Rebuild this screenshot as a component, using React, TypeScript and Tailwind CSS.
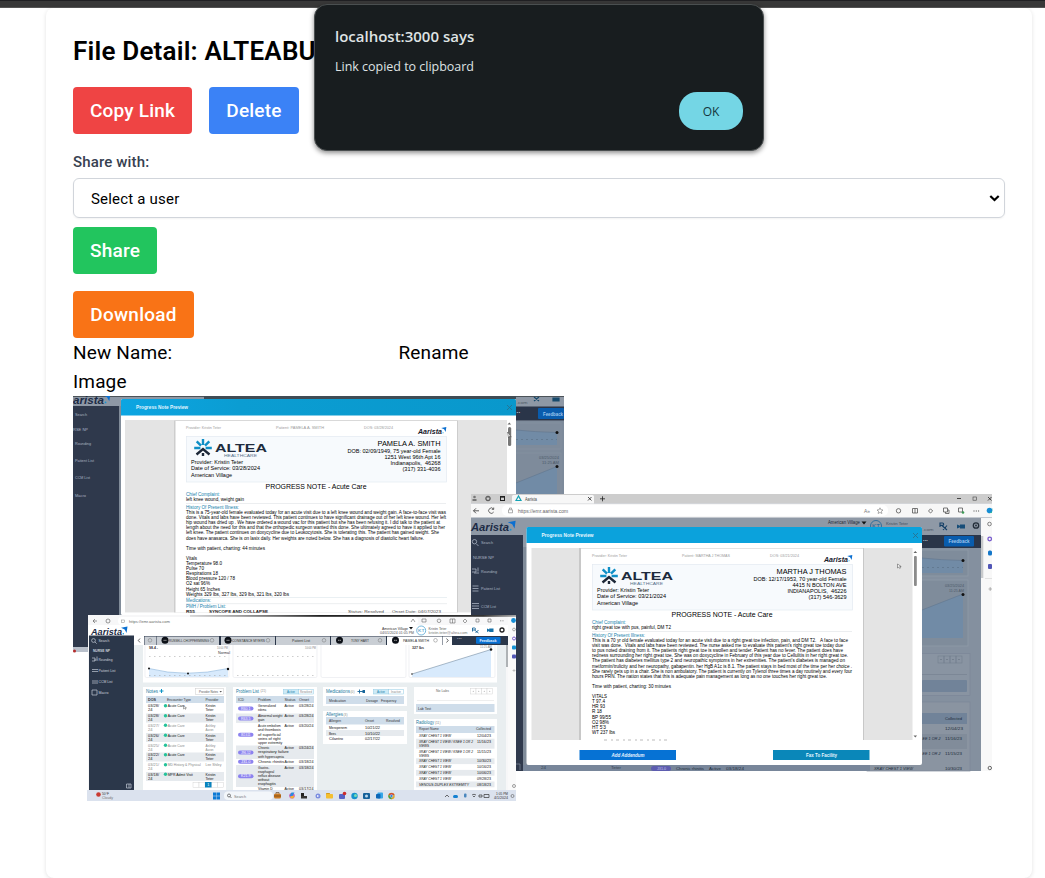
import React from "react";

type TProps = {
  x: number;
  y: number;
  s?: number;
  w?: number;
  f?: string;
  b?: boolean;
  i?: boolean;
  end?: boolean;
  children: React.ReactNode;
};

function T({ x, y, s = 5, w, f = "#222", b, i, end, children }: TProps) {
  return (
    <text
      x={x}
      y={y}
      fontSize={s}
      fill={f}
      fontWeight={b ? 700 : 400}
      fontStyle={i ? "italic" : "normal"}
      textAnchor={end ? "end" : "start"}
      textLength={w}
      lengthAdjust="spacingAndGlyphs"
      xmlSpace="preserve"
    >
      {children}
    </text>
  );
}

function R({ x, y, w, h, f, r }: { x: number; y: number; w: number; h: number; f: string; r?: number }) {
  return <rect x={x} y={y} width={w} height={h} fill={f} rx={r} />;
}

function Aarista({
  x,
  y,
  s,
  w,
  dark = "#1c2b45",
  label = "Aarista",
}: {
  x: number;
  y: number;
  s: number;
  w: number;
  dark?: string;
  label?: string;
}) {
  return (
    <g>
      <T x={x} y={y} s={s} w={w} f={dark} b i>
        {label}
      </T>
      <path
        d={`M${x + w - s * 0.1} ${y - s * 0.75} l${s * 0.68} ${-s * 0.13} l${-s * 0.1} ${s * 0.68} l${-s * 0.2} ${-s * 0.36} z`}
        fill="#0b6fd0"
      />
      <circle cx={x + w + s * 0.14} cy={y - s * 0.1} r={s * 0.08} fill="#1596d4" />
    </g>
  );
}

function Altea({ x, y }: { x: number; y: number }) {
  return (
    <g>
      <g strokeWidth="2.4" fill="none">
        <path
          stroke="#0f8fc6"
          d={`M${x} ${y - 2.5}V${y - 8.5}M${x - 2} ${y - 1.800}l-4.300-4.300M${x + 2} ${y - 1.800}l4.300-4.300M${x - 2.600} ${y + 0.500}h-6.200M${x + 2.600} ${y + 0.500}h6.200`}
        />
        <path stroke="#1d2838" d={`M${x - 6.500} ${y + 7}L${x} ${y + 1.500}L${x + 6.500} ${y + 7}M${x} ${y + 5.500}v3`} />
      </g>
      <T x={x + 12} y={y + 4.300} s={11.500} w={52} f="#202b3d" b>
        ALTEA
      </T>
      <T x={x + 21} y={y + 9.200} s={3.400} w={33} f="#56708c">
        HEALTHCARE
      </T>
    </g>
  );
}

type Note = {
  x: number;
  y: number;
  patient: string;
  dos: string;
  name: string;
  nameW: number;
  info: [string, number][];
  complaint: [string, number];
  date: string;
  hpi: [string, number][];
  chart: [string, number];
  vitals: [string, number][];
};

// Progress note page; x, y are the top-left corner of the sheet.
function NoteSheet(n: Note) {
  const { x, y } = n;
  return (
    <g>
      <T x={x + 11} y={y + 8.3} s={4} w={35} f="#9b9b9b">
        Provider: Kristin Teter
      </T>
      <T x={x + 101} y={y + 8.3} s={4} w={48} f="#9b9b9b">
        {n.patient}
      </T>
      <T x={x + 189} y={y + 8.3} s={4} w={29} f="#9b9b9b">
        {n.dos}
      </T>
      <Aarista x={x + 243} y={y + 13} s={7.5} w={24} dark="#17202e" />
      <rect x={x + 11.5} y={y + 16} width="260" height="45.5" fill="#f7fafd" stroke="#e3eaf1" strokeWidth=".7" />
      <Altea x={x + 28} y={y + 27} />
      <T x={x + 16} y={y + 43.7} s={5.8} w={52} f="#000">
        Provider: Kristin Teter
      </T>
      <T x={x + 16} y={y + 49.9} s={5.8} w={69} f="#000">
        {n.date}
      </T>
      <T x={x + 16} y={y + 56} s={5.8} w={41} f="#000">
        American Village
      </T>
      <T x={x + 265.5} y={y + 25.5} s={7} w={n.nameW} f="#000" end>
        {n.name}
      </T>
      {n.info.map(([t, w], k) => (
        <T key={k} x={x + 265.5} y={y + 32.2 + k * 6.2} s={5.7} w={w} f="#000" end>
          {t}
        </T>
      ))}
      <T x={x + 90.5} y={y + 68.7} s={6.6} w={101} f="#000">
        PROGRESS NOTE - Acute Care
      </T>
      <T x={x + 11} y={y + 75.5} s={4.8} w={34} f="#1681ab">
        Chief Complaint:
      </T>
      <T x={x + 11} y={y + 80.8} s={4.8} w={n.complaint[1]} f="#000">
        {n.complaint[0]}
      </T>
      <R x={x + 11} y={y + 82.5} w={260} h={0.6} f="#dfe3e6" />
      <T x={x + 11} y={y + 88.2} s={4.8} w={53} f="#1681ab">
        History Of Present Illness:
      </T>
      {n.hpi.map(([t, w], k) => (
        <T key={k} x={x + 11} y={y + 93.5 + k * 5.1} s={4.8} w={w} f="#000">
          {t}
        </T>
      ))}
      <T x={x + 11} y={y + 93.5 + (n.hpi.length + 1) * 5.1} s={4.8} w={n.chart[1]} f="#000">
        {n.chart[0]}
      </T>
      {n.vitals.map(([t, w], k) => (
        <T key={k} x={x + 11} y={y + 93.5 + (n.hpi.length + 3 + k) * 5.1} s={4.8} w={w} f="#000">
          {t}
        </T>
      ))}
    </g>
  );
}

function WindowPamela() {
  return (
    <g>
      <R x={73} y={396} w={491} h={256} f="#8e98a5" />
      <R x={73} y={396} w={491} h={1} f="#4c5359" />
      <R x={204} y={396} w={312} h={3} f="#3f4c55" />
      <Aarista x={73} y={403.5} s={11} w={31} label="arista" />
      <R x={73} y={406} w={46} h={241} f="#2f394c" />
      <R x={73} y={647} w={15} h={5} f="#b9c0cb" />
      <circle cx="74.5" cy="651" r="1.5" fill="#b62b2b" />
      <T x={75} y={416} s={4} w={12} f="#aab3c2">Search</T>
      <T x={73} y={431} s={4} w={15} f="#aab3c2">RSE NP</T>
      <T x={75} y={445} s={4} w={16} f="#aab3c2">Rounding</T>
      <T x={75} y={462} s={4} w={19} f="#aab3c2">Patient List</T>
      <T x={75} y={479} s={4} w={15} f="#aab3c2">CCM List</T>
      <T x={75} y={496.5} s={4} w={11} f="#aab3c2">Macro</T>
      <R x={119} y={406} w={3} h={210} f="#818c99" />

      <R x={516} y={406.5} w={48} h={14} f="#2a3549" />
      <T x={516.5} y={403.5} s={4} w={11} f="#4d5866">.com</T>
      <path d="M534 397l5 4m0-4l-5 4M553 398h6v3h-6z" stroke="#184a6c" strokeWidth="1.2" fill="#184a6c" />
      <T x={516.5} y={413.5} s={5} w={4} f="#dbe3ee" b>··</T>
      <R x={538} y={408} w={26} h={11} f="#095cad" r={1} />
      <T x={543} y={415.7} s={4.7} w={20} f="#9fc5ec" b>Feedback</T>
      <R x={516} y={421} w={48} h={73} f="#7e8b9b" />
      <path d="M516 430Q535 432 557 432.500V445H516Z" fill="#718ba6" />
      <path d="M516 430Q535 432 557 432.500" stroke="#60768e" strokeWidth=".6" fill="none" />
      <path d="M516 439.500H557" stroke="#56697d" strokeWidth=".5" strokeDasharray="2 3" />
      <rect x="510" y="423" width="51" height="26" fill="none" stroke="#8793a1" strokeWidth=".7" />
      <rect x="510" y="453" width="51" height="42" fill="none" stroke="#8793a1" strokeWidth=".7" />
      <path d="M516 483L557 466.500V494H516Z" fill="#718ba6" />
      <path d="M516 483L557 466.500" stroke="#60768e" strokeWidth=".6" />
      <circle cx="557" cy="432.500" r="1.5" fill="#111" />
      <circle cx="557" cy="466.500" r="1.5" fill="#111" />
      <T x={559} y={458.5} s={3.7} w={20} f="#4c5968" end>03/25/2024</T>
      <T x={559} y={464} s={3.7} w={17} f="#4c5968" end>11:25 AM</T>

      <R x={121} y={399} w={395} h={216} f="#fff" r={1.5} />
      <path d="M121 415.500v-15a1.500 1.500 0 0 1 1.500-1.500h392a1.500 1.500 0 0 1 1.500 1.500v15z" fill="url(#blueBar)" />
      <T x={136} y={409} s={5.3} w={52} f="#e2f5ff" b>Progress Note Preview</T>
      <path d="M507 405l5 5m0-5l-5 5" stroke="#2c6c88" strokeWidth=".8" />
      <R x={125} y={420} w={382} h={192.5} f="#e4e4e4" />
      <R x={174} y={420.5} w={284} h={192} f="#cdcdcd" />
      <R x={175.5} y={421} w={281.5} h={191.5} f="#fff" />
      <R x={508} y={427} w={3.2} h={19} f="#777" r={1.5} />
      <path d="M507.500 424.500l1.800-2 1.800 2z" fill="#666" />
      <path d="M507.500 432l1 6 1.200-2 1.600 1z" fill="#fff" stroke="#444" strokeWidth=".5" />
      <NoteSheet
        x={175}
        y={420.5}
        patient="Patient: PAMELA A. SMITH"
        dos="DOS: 03/28/2024"
        name="PAMELA A. SMITH"
        nameW={63}
        info={[
          ["DOB: 02/09/1949, 75 year-old Female", 93],
          ["1251 West 96th Apt 16", 56],
          ["Indianapolis,  46268", 50],
          ["(317) 331-4036", 38],
        ]}
        date="Date of Service: 03/28/2024"
        complaint={["left knee wound, weight gain", 58]}
        hpi={[
          ["This is a 75-year-old female evaluated today for an acute visit due to a left knee wound and weight gain. A face-to-face visit was", 260],
          ["done. Vitals and labs have been reviewed. This patient continues to have significant drainage out of her left knee wound. Her left", 260],
          ["hip wound has dried up . We have ordered a wound vac for this patient but she has been refusing it. I did talk to the patient at", 254],
          ["length about the need for this and that the orthopedic surgeon wanted this done. She ultimately agreed to have it applied to her", 259],
          ["left knee. The patient continues on doxycycline due to Leukocytosis. She is tolerating this. The patient has gained weight. She", 253],
          ["does have anasarca. She is on lasix daily. Her weights are noted below. She has a diagnosis of diastolic heart failure.", 238],
        ]}
        chart={["Time with patient, charting: 44 minutes", 79]}
        vitals={[
          ["Vitals", 11],
          ["Temperature 98.0", 36],
          ["Pulse 70", 18],
          ["Respirations 18", 32],
          ["Blood pressure 120 / 78", 49],
          ["O2 sat 96%", 24],
          ["Height 65 Inches", 34],
          ["Weights 329 lbs, 327 lbs, 329 lbs, 321 lbs, 320 lbs", 103],
        ]}
      />
      <R x={186} y={597} w={261} h={0.6} f="#dce6ec" />
      <T x={186} y={602.3} s={4.6} w={25} f="#1681ab">Medications:</T>
      <R x={186} y={603.5} w={261} h={0.6} f="#dfe3e6" />
      <T x={186} y={608.3} s={4.6} w={40} f="#1681ab">PMH / Problem List:</T>
      <T x={186} y={613} s={4.3} w={9} f="#111" b>R55</T>
      <T x={209} y={613} s={4.3} w={59} f="#111" b>SYNCOPE AND COLLAPSE</T>
      <T x={348} y={613} s={4} w={36} f="#444">Status: Resolved</T>
      <T x={392} y={613} s={4} w={49} f="#444">Onset Date: 04/07/2023</T>
      <R x={125} y={612.8} w={391} h={2.2} f="#fff" />
    </g>
  );
}

function WindowMartha() {
  return (
    <g>
      <R x={471} y={494} w={521} h={277} f="#8f99a6" />
      <R x={471} y={494} w={521} h={9.5} f="#cdcdcd" />
      <path d="M512 503.500v-7a1.500 1.500 0 0 1 1.500-1.500h79a1.500 1.500 0 0 1 1.500 1.500v7z" fill="#f7f7f7" />
      <R x={471} y={503.5} w={521} h={14} f="#f7f7f7" />
      <circle cx="474.5" cy="497" r="1.3" fill="#777" />
      <R x={472.5} y={499} w={4} h={2} f="#777" />
      <circle cx="488" cy="498.500" r="2.300" fill="none" stroke="#444" strokeWidth=".9" />
      <path d="M486.500 497.500h3v2.500h-3z" fill="none" stroke="#555" strokeWidth=".5" />
      <rect x="500.500" y="496.500" width="4" height="4" fill="none" stroke="#222" strokeWidth="1" />
      <path d="M500 497h5" stroke="#222" strokeWidth="1.300" />
      <path d="M516 500.500l2.500-4.500 2.500 4.500z" fill="none" stroke="#14a3b5" strokeWidth="1.2" />
      <T x={525} y={500.5} s={4.5} w={12} f="#444">Aarista</T>
      <path
        d="M588 497l3.500 3.500m0-3.500l-3.500 3.500M600 498.800h5m-2.500-2.500v5M957 498.500h4M988 497l3.500 3.500m0-3.500l-3.500 3.500"
        stroke="#222"
        strokeWidth=".8"
      />
      <rect x="973" y="497" width="3.500" height="3.200" fill="none" stroke="#444" strokeWidth=".6" />
      <R x={502} y={505} w={386} h={11} f="#fff" r={5} />
      <path d="M479 510.800h-5.500m2.500-2.500l-2.500 2.500 2.500 2.500" stroke="#333" strokeWidth=".8" fill="none" />
      <path d="M493.500 509a2.700 2.700 0 1 0 .2 3m0-4.500v1.900h-1.900" stroke="#333" strokeWidth=".7" fill="none" />
      <path d="M508.500 509.800h4v3h-4zM509.500 509.500v-1.500h2v1.500" stroke="#777" strokeWidth=".6" fill="none" />
      <T x={518} y={512.6} s={5} w={50} f="#666">https://emr.aarista.com</T>
      <T x={864} y={512.7} s={5} w={6} f="#777">A»</T>
      <path
        d="M880 507.800l.9 2 2.100.2-1.600 1.400.5 2.100-1.900-1.100-1.900 1.100.5-2.100-1.600-1.400 2.100-.2z"
        stroke="#777"
        strokeWidth=".6"
        fill="none"
      />
      <g stroke="#555" strokeWidth=".8" fill="none">
        <circle cx="898.500" cy="510.800" r="2.200" />
        <path d="M912.500 508.500h5v4.500h-5zM915 508.500v4.500M928.500 511l2-2.200 2.200 2.200-2.200 2zM943.500 508h4v4h-4zM945.500 512v1.500h3.500v-3.500h-1.500M958.500 508h4v4h-4z" />
      </g>
      <circle cx="963" cy="512.500" r="1.300" fill="#3b9a55" />
      <path d="M973.500 511h6" stroke="#444" strokeWidth="1" strokeDasharray="1 1.300" />

      <Aarista x={471} y={530.8} s={11.5} w={38} />
      <R x={471} y={535} w={52} h={236} f="#2f394c" />
      <g stroke="#aab3c2" strokeWidth=".8" fill="none">
        <circle cx="474.500" cy="541.700" r="2.200" />
        <path d="M476.500 544l2 2M472 569h4v3h-4M474 573h5M478 567.500v4M472.500 586h6M472.500 588.500h6M472.500 591h6M472 603.500h7M472 606h7M472 608.500h7" />
      </g>
      <T x={481} y={544} s={4} w={12} f="#aab3c2">Search</T>
      <T x={473} y={558.5} s={4} w={21} f="#aab3c2">NURSE NP</T>
      <T x={481} y={572.5} s={4} w={16} f="#aab3c2">Rounding</T>
      <T x={481} y={590} s={4} w={19} f="#aab3c2">Patient List</T>
      <T x={481} y={607.5} s={4} w={15} f="#aab3c2">CCM List</T>
      <R x={523} y={547} w={4} h={224} f="#7f8b99" />
      <path d="M516 764h4v6" stroke="#8c95a5" strokeWidth=".6" fill="none" />

      <T x={828} y={524.3} s={4.5} w={32} f="#1d2733">American Village</T>
      <path d="M861.500 521.500h5l-2.500 3z" fill="#111" />
      <circle cx="876" cy="526" r="5.500" fill="none" stroke="#19649a" strokeWidth=".8" />
      <T x={872} y={527.7} s={5} w={8} f="#19649a">KT</T>
      <T x={886} y={524.5} s={4.3} w={22} f="#3e4d5e">Kristin Teter</T>
      <T x={922.5} y={531} s={4} w={11} f="#4d5866">.com</T>
      <g stroke="#143f66" strokeWidth="1.100" fill="none">
        <path d="M940 527v-4h2.500a1.200 1.200 0 0 1 0 2.400H940M942 525.500l5 4.500M947 525.500l-4 4.500" />
      </g>
      <path d="M957 524.500l3 1.200v-1.200h5v4h-5v-1.200l-3 1.200z" fill="#174d78" />
      <circle cx="976" cy="525.500" r="2.700" fill="none" stroke="#222c38" strokeWidth="1.300" />
      <circle cx="976" cy="525.500" r=".9" fill="#222c38" />

      <R x={922} y={535} w={59} h={13} f="#2a3549" />
      <T x={923} y={541.5} s={5} w={5} f="#dbe3ee" b>···</T>
      <R x={944} y={536} w={30} h={10.5} f="#095cad" r={1} />
      <T x={948.5} y={543} s={4.7} w={21} f="#9fc5ec" b>Feedback</T>
      <R x={922} y={548} w={59} h={223} f="#84909f" />
      <rect x="915" y="550" width="53" height="26" fill="#7f8c9b" stroke="#909ba8" strokeWidth=".8" />
      <path d="M922 558Q940 560 963 560.500V573H922Z" fill="#718ba6" />
      <path d="M922 567.500h41" stroke="#56697d" strokeWidth=".5" strokeDasharray="2 3" />
      <rect x="915" y="580" width="53" height="66" fill="#7f8c9b" stroke="#909ba8" strokeWidth=".8" />
      <path d="M922 610L963 594V638H922Z" fill="#718ba6" />
      <path d="M922 558Q940 560 963 560.500M922 610L963 594" stroke="#60768e" strokeWidth=".6" fill="none" />
      <circle cx="963" cy="560.500" r="1.5" fill="#111" />
      <circle cx="963" cy="594.500" r="1.5" fill="#111" />
      <T x={964} y={586.5} s={3.7} w={19} f="#4c5968" end>03/25/2024</T>
      <T x={964} y={592} s={3.7} w={15} f="#4c5968" end>11:25 AM</T>
      <rect x="915" y="653.500" width="55" height="42" fill="#8994a2" stroke="#7b8797" strokeWidth=".7" />
      <R x={922} y={680} w={45} h={12} f="#718399" r={1} />
      {[938, 944, 950, 956].map((x) => (
        <g key={x}>
          <rect x={x} y="656" width="6" height="7" fill="none" stroke="#6f7b8a" strokeWidth=".5" />
          <circle cx={x + 3} cy="659.500" r=".6" fill="#5c6878" />
        </g>
      ))}
      <path d="M922 674.500h45" stroke="#6f7b8a" strokeWidth=".5" />
      <rect x="867" y="702" width="103" height="69" fill="#8a94a1" stroke="#7b8797" strokeWidth=".7" />
      <R x={922} y={713} w={45} h={11} f="#718399" />
      <T x={945} y={720} s={4.2} w={17} f="#202c3a">Collected</T>
      <R x={922} y={734} w={45} h={15} f="#818c9a" />
      <T x={945} y={730} s={4.2} w={18} f="#202c3a">12/04/23</T>
      <T x={922.5} y={739.5} s={4.2} w={18} f="#202c3a" i>EE 1 OR 2</T>
      <T x={945} y={739.5} s={4.2} w={17} f="#202c3a">11/16/23</T>
      <T x={922.5} y={754.5} s={4.2} w={18} f="#202c3a" i>EE 1 OR 2</T>
      <T x={945} y={754.5} s={4.2} w={17} f="#202c3a">11/15/23</T>
      <R x={981} y={518} w={11} h={253} f="#f8f8f8" />
      <R x={981} y={536} w={2.3} h={42} f="#c8cacc" />
      <circle cx="989.500" cy="510.500" r="2.800" fill="#168ed5" />
      <path d="M992 508v5h-4a3.500 3.500 0 0 0 4-5" fill="#35bd93" />
      <circle cx="989.500" cy="524" r="1.800" fill="none" stroke="#666" strokeWidth=".8" />
      <circle cx="989.700" cy="539" r="1.800" fill="none" stroke="#7659cc" strokeWidth="1.300" />
      <R x={988} y={550.5} w={4} h={5} f="#1477c9" r={1.5} />
      <R x={988} y={564} w={4} h={5} f="#5156b6" r={1} />
      <R x={985} y={578} w={7} h={0.5} f="#ccc" />
      <path d="M988.500 589h3.500m-1.800-2v4" stroke="#888" strokeWidth=".6" />
      <circle cx="989.800" cy="768" r="1.700" fill="none" stroke="#666" strokeWidth="1" />
      <R x={523} y={765} w={347} h={6} f="#78869a" />
      <T x={541} y={769} s={4} w={5} f="#333f4f">24</T>
      <T x={611} y={769} s={4} w={10} f="#333f4f">Teter</T>
      <R x={651} y={766} w={20} h={5} f="#5e5db0" r={2.5} />
      <T x={657} y={770.2} s={4} w={9} f="#c5c7ea">J31.0</T>
      <T x={676} y={770} s={4.2} w={28} f="#202c3a">Chronic rhinitis</T>
      <T x={709} y={770} s={4.2} w={12} f="#202c3a">Active</T>
      <T x={726} y={770} s={4.2} w={18} f="#202c3a">03/18/24</T>
      <T x={874} y={770} s={4.2} w={39} f="#202c3a" i>XRAY CHEST 1 VIEW</T>
      <T x={945} y={770} s={4.2} w={17} f="#202c3a">10/30/23</T>

      <R x={526.5} y={527} w={395.5} h={238} f="#fff" r={2} />
      <path d="M526.500 543v-14.500a1.500 1.500 0 0 1 1.500-1.500h392.500a1.500 1.500 0 0 1 1.500 1.500v14.500z" fill="#0ba2dc" />
      <T x={541.5} y={537} s={5.3} w={52} f="#e8f8ff" b>Progress Note Preview</T>
      <path d="M913 533l5 5m0-5l-5 5" stroke="#2c6c88" strokeWidth=".8" />
      <R x={531.5} y={548} w={381} h={192} f="#e4e4e4" />
      <R x={579} y={548} w={285} h={192} f="#c8c8c8" />
      <R x={581} y={548.5} w={282} h={192} f="#fff" />
      <R x={914} y={556} w={2.8} h={30} f="#8b8b8b" r={1} />
      <path d="M913.500 553l1.800-2 1.800 2zM913.500 735.500l1.800 2 1.800-2z" fill="#666" />
      <path d="M897.500 564v4l1.200-1 1 1.500.8-.5-.8-1.500h1.500z" fill="#fff" stroke="#444" strokeWidth=".5" />
      <NoteSheet
        x={581}
        y={548.5}
        patient="Patient: MARTHA J THOMAS"
        dos="DOS: 03/21/2024"
        name="MARTHA J THOMAS"
        nameW={70}
        info={[
          ["DOB: 12/17/1953, 70 year-old Female", 93],
          ["4415 N BOLTON AVE", 54],
          ["INDIANAPOLIS,  46226", 59],
          ["(317) 546-3629", 38],
        ]}
        date="Date of Service: 03/21/2024"
        complaint={["right great toe with pus, painful, DM T2", 79]}
        hpi={[
          ["This is a 70 yr old female evaluated today for an acute visit due to a right great toe infection, pain, and DM T2.   A face to face", 256],
          ["visit was done.  Vitals and labs have been reviewed. The nurse asked me to evaluate this patient's right great toe today due", 251],
          ["to pus noted draining from it. The patients right great toe is swollen and tender. Patient has no fever. The patient does have", 251],
          ["redness surrounding her right great toe. She was on doxycycline in February of this year due to Cellulitis in her right great toe.", 256],
          ["The patient has diabetes mellitus type 2 and neuropathic symptoms in her extremities. The patient's diabetes is managed on", 253],
          ["metformin/trulicity and her neuropathy, gabapentin. her HgB A1c is 8.1. The patient stays in bed most of the time per her choice .", 260],
          ["She rarely gets up in a chair. She is non ambulatory. The patient is currently on Tylenol three times a day routinely and every four", 260],
          ["hours PRN. The nation states that this is adequate pain management as long as no one touches her right great toe.", 235],
        ]}
        chart={["Time with patient, charting: 30 minutes", 79]}
        vitals={[
          ["VITALS", 15],
          ["T 97.4", 13],
          ["HR 93", 13],
          ["R 18", 10],
          ["BP 99/55", 19],
          ["O2 98%", 17],
          ["HT 5'3", 14],
          ["WT 237 lbs", 23],
        ]}
      />
      <path d="M604 740h66" stroke="#aaa" strokeWidth=".8" strokeDasharray="3 4 2 3" />
      <R x={579.5} y={750} w={96.5} h={10} f="#0672d4" />
      <T x={611.5} y={757} s={5} w={33} f="#e6f2ff" i b>Add Addendum</T>
      <R x={773} y={750} w={96.5} h={10} f="#0a87b9" />
      <T x={806} y={757} s={5} w={31} f="#e6f6ff" b>Fax To Facility</T>
    </g>
  );
}

const notes: [number, string, string, string, string, string, boolean][] = [
  [706, "03/28/", "24", "Acute Care", "Kristin", "Teter", true],
  [716, "03/28/", "24", "Acute Care", "Kristin", "Teter", true],
  [725.5, "03/27/", "24", "Acute Care", "Ashley", "Aaron", false],
  [735.5, "03/26/", "24", "Acute Care", "Kristin", "Teter", true],
  [745.5, "03/25/", "24", "Acute Care", "Ashley", "Aaron", false],
  [755, "03/22/", "24", "Acute Care", "Kristin", "Teter", true],
  [765, "03/21/", "24", "MD History & Physical", "Lee Shiley", "", false],
  [774.5, "03/18/", "24", "MPR Admit Visit", "Kristin", "Teter", true],
];

const problems: [number, string, string[], string, string][] = [
  [706, "R60.1", ["Generalized", "edema"], "03/28/24", "#fff"],
  [716, "R63.5", ["Abnormal weight", "gain"], "03/28/24", "#e6eaee"],
  [726, "I82.611", ["Acute embolism", "and thrombosis", "of superficial", "veins of right", "upper extremity"], "03/20/24", "#fff"],
  [748, "J96.12", ["Chronic", "respiratory failure", "with hypercapnia"], "03/24/24", "#e6eaee"],
  [761.5, "J31.0", ["Chronic rhinitis"], "03/18/24", "#fff"],
  [767.5, "K21.9", ["Gastro-", "esophageal", "reflux disease", "without", "esophagitis"], "03/18/24", "#e6eaee"],
  [788.7, "", ["Vitamin D"], "03/17/24", "#fff"],
];

const radiology: [number, string, string, boolean][] = [
  [736.7, "XRAY CHEST 1 VIEW", "12/04/23", false],
  [742.7, "XRAY CHEST 1 VIEW / KNEE 1 OR 2", "11/16/23", true],
  [752.5, "XRAY CHEST 1 VIEW / KNEE 1 OR 2", "11/15/23", false],
  [762.3, "XRAY CHEST 1 VIEW", "10/30/23", true],
  [768.1, "XRAY CHEST 1 VIEW", "10/16/23", false],
  [773.9, "XRAY CHEST 1 VIEW", "10/06/23", true],
  [779.7, "XRAY CHEST 1 VIEW", "09/28/23", false],
  [785.5, "VENOUS DUPLEX EXTREMITY", "08/18/23", true],
];

function WindowDashboard() {
  return (
    <g>
      <R x={88} y={615} w={428} h={186} f="#f7f7f8" />
      <rect x="190" y="615" width="326" height="1.800" fill="url(#shade)" />
      <R x={118} y={617} w={300} h={8} f="#fff" r={4} />
      <path d="M97 621h-4m2-2l-2 2 2 2" stroke="#555" strokeWidth=".6" fill="none" />
      <circle cx="108" cy="621" r="2" fill="none" stroke="#555" strokeWidth=".6" />
      <rect x="121.500" y="620" width="3" height="2.500" fill="none" stroke="#888" strokeWidth=".5" />
      <T x={129} y={622.5} s={4.2} w={41} f="#666">https://emr.aarista.com</T>
      <g stroke="#666" strokeWidth=".6" fill="none">
        <path d="M411 622l2-3 2 3M422 619h4v3h-4zM450 619h5v4h-5zM452.500 619v4M463 621l2-2 2 2-2 2zM476 619h3v3h-3zM488 619h3v3h-3z" />
        <circle cx="439" cy="620.800" r="1.800" />
        <path d="M500 620.800h4" strokeDasharray="1 .7" />
      </g>
      <R x={88} y={625} w={420} h={11} f="#fff" />
      <Aarista x={91} y={634.8} s={9.5} w={31} />
      <T x={382} y={629.7} s={4} w={26} f="#333">American Village</T>
      <path d="M409 627h4l-2 2.500z" fill="#111" />
      <T x={380} y={634} s={3.3} w={34} f="#555">04/01/2024 01:05 PM</T>
      <circle cx="421.200" cy="630.500" r="4.500" fill="#fff" stroke="#3e99cc" strokeWidth=".7" />
      <T x={418} y={632} s={4} w={6.5} f="#278ac1">KT</T>
      <T x={428.5} y={629.5} s={3.5} w={18} f="#555">Kristin Teter</T>
      <T x={428.5} y={633.8} s={3.5} w={39} f="#777">kristin.teter@altea.com</T>
      <path
        d="M472.500 631.500v-3.500h2a1 1 0 0 1 0 2h-2M474.500 630l4 3M478.500 630l-3 3"
        stroke="#17659a"
        strokeWidth=".9"
        fill="none"
      />
      <path d="M487 628.500l2.200 1v-1h4.300v3.500h-4.300v-1l-2.200 1z" fill="#1470a7" />
      <circle cx="502" cy="630" r="2" fill="none" stroke="#222" strokeWidth="1.300" />

      <R x={89} y={635.5} w={45} h={155} f="#2b374a" />
      <g stroke="#c2cad6" strokeWidth=".7" fill="none">
        <circle cx="93.500" cy="640.500" r="1.900" />
        <path d="M95 642l1.700 1.700M92 658h3v3h-3M94 660h4M97 656.500v3M92 669.500h6M92 671.500h6M92 681h6M92 683h6M92 690h5v5h-5zM126.500 784h4.500v4h-4.500zM129 784v4" />
      </g>
      <T x={98.5} y={642.3} s={3.8} w={11} f="#ccd3de">Search</T>
      <T x={93} y={651.5} s={3.5} w={17} f="#ccd3de" b>NURSE NP</T>
      <T x={98.5} y={660.7} s={3.8} w={14} f="#ccd3de">Rounding</T>
      <T x={98.5} y={671.7} s={3.8} w={17} f="#ccd3de">Patient List</T>
      <T x={98.5} y={683} s={3.8} w={14} f="#ccd3de">CCM List</T>
      <T x={98.5} y={694} s={3.8} w={10} f="#ccd3de">Macro</T>

      <R x={134} y={636} w={374} h={9} f="#2b374a" />
      <R x={134} y={636} w={10} h={9} f="#fff" />
      <R x={144.5} y={636.5} w={12} h={8.5} f="#c9ced4" />
      <R x={157} y={636.5} w={62} h={8.5} f="#c9ced4" />
      <R x={221} y={636.5} w={54} h={8.5} f="#c9ced4" />
      <R x={276} y={636.5} w={54} h={8.5} f="#c9ced4" />
      <R x={331} y={636.5} w={55} h={8.5} f="#c9ced4" />
      <R x={387} y={636.5} w={55} h={8.5} f="#fff" />
      <R x={442.5} y={636.5} w={9.5} h={8.5} f="#fff" />
      <path d="M140 638.500l-1.700 2 1.700 2M446.500 638.500l1.700 2-1.700 2" stroke="#222" strokeWidth=".7" fill="none" />
      {[150, 212, 268, 324, 380, 435.5].map((x) => (
        <circle key={x} cx={x} cy="640.300" r="1.800" fill="none" stroke="#777" strokeWidth=".5" />
      ))}
      {[165, 228, 339.5, 395.5].map((x) => (
        <g key={x}>
          <circle cx={x} cy="640.300" r="3.500" fill="#0c1017" />
          <path d={`M${x - 1.5} 640.300h3`} stroke="#aaa" strokeWidth=".9" strokeDasharray="1.300 .4" />
        </g>
      ))}
      <T x={169} y={642} s={3.8} w={40} f="#333">RUSSELL CHOPPERMINING</T>
      <T x={232} y={642} s={3.8} w={33} f="#333">CONSTANCE MYERS</T>
      <T x={292} y={641.8} s={3.8} w={18} f="#333">Patient List</T>
      <T x={351} y={641.8} s={3.8} w={18} f="#333">TONY HART</T>
      <T x={403} y={641.8} s={3.8} w={26} f="#333">PAMELA SMITH</T>
      <T x={457} y={640} s={4} w={5} f="#fff" b>···</T>
      <R x={476} y={637} w={24.5} h={6.8} f="#0871d3" r={0.8} />
      <T x={479.5} y={641.9} s={4} w={17} f="#e8f3ff" b>Feedback</T>

      <R x={134} y={645} w={372} h={145} f="#e9eef0" />
      <R x={143} y={645} w={354} h={37.5} f="#fff" />
      {[
        [145, 84],
        [233, 84],
        [321, 85],
        [409, 86],
      ].map(([x, w]) => (
        <path
          key={x}
          d={`M${x} 645v31a1.500 1.500 0 0 0 1.500 1.500h${w - 3}a1.500 1.500 0 0 0 1.500-1.500v-31`}
          fill="#fff"
          stroke="#e5e8ec"
          strokeWidth=".6"
        />
      ))}
      <path d="M149 668.500Q186 678 228 668.500V677H149Z" fill="#d8eafc" />
      <path d="M149 668.500Q186 678 228 668.500" fill="none" stroke="#87b1da" strokeWidth=".6" />
      <g stroke="#9b9b9b" strokeWidth=".5" strokeDasharray="1.5 3.5" fill="none">
        <path d="M149 656.500h79M149 675.500h79M237 656.500h80M237 675.500h80" />
      </g>
      <circle cx="149" cy="668.500" r="1" fill="#111" />
      <circle cx="188" cy="673.500" r="1" fill="#111" />
      <circle cx="228" cy="669" r="1.200" fill="#111" />
      <path d="M412 674L491 649.500V677H412Z" fill="#d8eafc" />
      <path d="M412 674L491 649.500" stroke="#5f7991" strokeWidth=".5" />
      <circle cx="412" cy="674" r="1" fill="#777" />
      <circle cx="491" cy="649.500" r="1.300" fill="#111" />
      <T x={149} y={649} s={4} w={9} f="#333" b>98.4 -</T>
      <T x={217} y={648.7} s={3.3} w={11} f="#888">10:00 PM</T>
      <T x={218} y={653.5} s={3.6} w={12} f="#333">Normal</T>
      <T x={305} y={648.7} s={3.3} w={11} f="#888">10:00 PM</T>
      <T x={412} y={649} s={4} w={12} f="#333" b>327 lbs</T>
      <T x={480} y={648} s={3.3} w={12} f="#888">11:25 AM</T>

      <R x={143} y={687} w={83} h={103} f="#fff" />
      <T x={146} y={693} s={5} w={12} f="#19789c">Notes</T>
      <path d="M159.500 691h4m-2-2v4" stroke="#0f94c5" strokeWidth="1" />
      <rect x="195.500" y="688.500" width="28" height="6" fill="#fff" stroke="#ccc" strokeWidth=".5" />
      <T x={199} y={692.8} s={3.3} w={19} f="#555">Provider Notes</T>
      <path d="M219.500 691h2.400l-1.200 1.500z" fill="#555" />
      <R x={146} y={696} w={78} h={7} f="#cfddea" />
      <T x={148} y={701} s={3.8} w={8} f="#333" b>DOS</T>
      <T x={167} y={701} s={3.8} w={24} f="#333">Encounter Type</T>
      <T x={205.5} y={701} s={3.8} w={13} f="#333">Provider</T>
      {notes.map(([y, d1, d2, t, p1, p2, dark], k) => (
        <g key={k}>
          {k % 2 === 1 && <R x={146} y={y - 2.5} w={78} h={9} f="#e6eaee" />}
          <T x={148} y={y + 1.2} s={3.6} w={11} f={dark ? "#111" : "#888"}>{d1}</T>
          <T x={148} y={y + 5.4} s={3.6} w={4.5} f={dark ? "#111" : "#888"}>{d2}</T>
          <circle cx="165.500" cy={y - 0.2} r="1.700" fill="#26c29b" />
          <T x={167.7} y={y + 1.2} s={3.6} w={k === 6 ? 33 : k === 7 ? 25 : 17} f={dark ? "#111" : "#888"}>{t}</T>
          <T x={205.5} y={y + 1.2} s={3.6} w={k === 6 ? 16 : 10} f={dark ? "#111" : "#888"}>{p1}</T>
          {p2 && <T x={205.5} y={y + 5.4} s={3.6} w={8} f={dark ? "#111" : "#888"}>{p2}</T>}
        </g>
      ))}
      <path d="M183.500 706v3l1-.8.8 1.200.6-.4-.7-1.200h1.300z" fill="#fff" stroke="#444" strokeWidth=".4" />
      {[193, 199, 211.5, 217.5].map((x) => (
        <rect key={x} x={x} y="782.500" width="6" height="5" fill="#fff" stroke="#ccc" strokeWidth=".4" />
      ))}
      <R x={205} y={782} w={6.5} h={5.5} f="#0882bd" />
      <T x={207.3} y={786.3} s={3.8} f="#fff">1</T>

      <R x={233} y={687} w={84} h={103} f="#fff" />
      <T x={236} y={692.5} s={4.7} w={23} f="#19789c">Problem List</T>
      <T x={260.5} y={692.3} s={3} w={5.5} f="#888">(21)</T>
      <rect x="283.500" y="689.500" width="15" height="4.500" fill="#cdeaf6" stroke="#8ecae3" strokeWidth=".5" />
      <rect x="298.500" y="689.500" width="15" height="4.500" fill="#fff" stroke="#8ecae3" strokeWidth=".5" />
      <T x={287} y={693} s={3.2} w={8} f="#1681ab">Active</T>
      <T x={300} y={693} s={3.2} w={12} f="#888">Resolved</T>
      <R x={236} y={696} w={78} h={7} f="#cfddea" />
      <T x={238} y={701} s={3.8} w={6} f="#333">ICD</T>
      <T x={258} y={701} s={3.8} w={13} f="#333">Problem</T>
      <T x={284.5} y={701} s={3.8} w={11} f="#333">Status</T>
      <T x={299} y={701} s={3.8} w={10} f="#333">Onset</T>
      {problems.map(([y, code, lines, date, bg], k) => {
        const h = lines.length * 4.2;
        return (
          <g key={k}>
            {k < 6 && <R x={236} y={y - 2.5} w={78} h={h + 1} f={bg} />}
            {code && <R x={238} y={y - 3.8 + h / 2} w={15.5} h={4} f="#8c83ef" r={2} />}
            {code && <T x={241} y={y - 0.7 + h / 2} s={3.3} w={9.5} f="#fff">{code}</T>}
            {lines.map((l, j) => (
              <T key={j} x={258} y={y + 1.1 + j * 4.2} s={3.5} w={l.length * 1.62} f="#111">{l}</T>
            ))}
            <T x={284.5} y={y + 1.1} s={3.5} w={9.5} f="#111">Active</T>
            <T x={299} y={y + 1.1} s={3.5} w={14.5} f="#111">{date}</T>
          </g>
        );
      })}

      <R x={323} y={687} w={84} h={19} f="#fff" />
      <T x={326} y={693} s={4.7} w={24} f="#19789c">Medications</T>
      <T x={350.5} y={692.8} s={3} w={4} f="#888">(0)</T>
      <path d="M357.500 691.500h4m-2-2v4M361 691.500h4" stroke="#17659a" strokeWidth=".9" />
      <R x={362.5} y={690} w={2.5} h={3} f="#17659a" />
      <rect x="373.500" y="689.500" width="15" height="4.500" fill="#cdeaf6" stroke="#8ecae3" strokeWidth=".5" />
      <rect x="388.500" y="689.500" width="15" height="4.500" fill="#fff" stroke="#8ecae3" strokeWidth=".5" />
      <T x={377} y={693} s={3.2} w={8} f="#1681ab">Active</T>
      <T x={391} y={693} s={3.2} w={10} f="#888">Inactive</T>
      <R x={326} y={696} w={78} h={8} f="#cfddea" />
      <T x={329} y={701.5} s={3.8} w={17} f="#333">Medication</T>
      <T x={366} y={701.5} s={3.8} w={12} f="#333">Dosage</T>
      <T x={381} y={701.5} s={3.8} w={15.5} f="#333">Frequency</T>
      <R x={323} y={711} w={84} h={33} f="#fff" />
      <T x={326} y={715.7} s={4.5} w={17} f="#19789c">Allergies</T>
      <T x={343.5} y={715.5} s={3} w={4} f="#888">(3)</T>
      <R x={326} y={717} w={78} h={7.5} f="#cfddea" />
      <T x={329} y={722} s={3.8} w={12} f="#333">Allergen</T>
      <T x={365} y={722} s={3.8} w={9} f="#333">Onset</T>
      <T x={386} y={722} s={3.8} w={14} f="#333">Resolved</T>
      <R x={326} y={730} w={78} h={6} f="#e6eaee" />
      <T x={329} y={728.7} s={3.7} w={18} f="#111">Meropenem</T>
      <T x={365} y={728.7} s={3.7} w={15} f="#111">10/21/22</T>
      <T x={329} y={734.5} s={3.7} w={7} f="#111">Bees</T>
      <T x={365} y={734.5} s={3.7} w={15} f="#111">10/10/22</T>
      <T x={329} y={740.3} s={3.7} w={14} f="#111">Cilantro</T>
      <T x={365} y={740.3} s={3.7} w={15} f="#111">02/17/22</T>

      <R x={414} y={687} w={83} h={27} f="#fff" />
      <T x={436} y={691.7} s={3.5} w={13} f="#666">No Labs</T>
      {[470.5, 476, 481.5, 487].map((x) => (
        <g key={x}>
          <rect x={x} y="688.500" width="5.500" height="5.500" fill="#fff" stroke="#ccc" strokeWidth=".4" />
          <circle cx={x + 2.75} cy="691.300" r=".5" fill="#999" />
        </g>
      ))}
      <path d="M417 700.500h77" stroke="#ddd" strokeWidth=".5" />
      <R x={416} y={704} w={78.5} h={8} f="#cfddea" />
      <T x={418} y={709.5} s={3.8} w={13} f="#333">Lab Test</T>
      <R x={414} y={719} w={83} h={71} f="#fff" />
      <T x={416} y={723.8} s={4.5} w={18} f="#19789c">Radiology</T>
      <T x={435} y={723.6} s={3} w={5.5} f="#888">(11)</T>
      <R x={416} y={726} w={78.5} h={7} f="#cfddea" />
      <T x={419} y={730.3} s={3.7} w={20} f="#333">Report Name</T>
      <T x={476} y={730.3} s={3.7} w={15} f="#333">Collected</T>
      {radiology.map(([y, t, d, shade], k) => (
        <g key={k}>
          {shade && <R x={416} y={y - 4} w={78.5} h={k === 1 ? 10 : 5.8} f="#e6eaee" />}
          <T x={419} y={y} s={3.5} w={t.length > 20 ? (k === 7 ? 50 : 54) : 32} f="#111" i>{t}</T>
          {(k === 1 || k === 2) && <T x={419} y={y + 4.3} s={3.5} w={10} f="#111" i>VIEWS</T>}
          <T x={477} y={y} s={3.5} w={14} f="#111">{d}</T>
        </g>
      ))}

      <R x={506} y={645} w={2} h={22} f="#aeb2b5" />
      <R x={508} y={617} w={8} h={174} f="#fafafa" />
      <circle cx="513.500" cy="620.500" r="2.400" fill="#168ed5" />
      <circle cx="514" cy="629.500" r="1.400" fill="none" stroke="#777" strokeWidth=".6" />
      <circle cx="514" cy="638.500" r="1.500" fill="none" stroke="#7659cc" strokeWidth="1" />
      <R x={512} y={645.5} w={4} h={4} f="#1493d5" r={1} />
      <R x={512} y={654.5} w={4} h={4} f="#5156b6" r={1} />
      <path d="M512.500 670.500h3m-1.500-1.500v3" stroke="#999" strokeWidth=".5" />
      <circle cx="514" cy="786" r="1.500" fill="none" stroke="#777" strokeWidth=".7" />

      <R x={87} y={790} w={429} h={11} f="#dbe2ee" />
      <circle cx="98.500" cy="794.500" r="2.300" fill="#c93b32" />
      <T x={102} y={795} s={3.5} w={7} f="#333">50°F</T>
      <T x={102} y={799.3} s={3.5} w={11} f="#777">Cloudy</T>
      <path d="M213 792.500h3.300v3.300h-3.300zM216.700 792.500h3.300v3.300h-3.300zM213 796.200h3.300v3.300h-3.300zM216.700 796.200h3.300v3.300h-3.300z" fill="#0b79d5" />
      <R x={224} y={791.5} w={49} h={8.5} f="#f3f6fa" r={4} />
      <circle cx="229" cy="795.500" r="1.5" fill="none" stroke="#333" strokeWidth=".6" />
      <path d="M230 796.500l1.500 1.500" stroke="#333" strokeWidth=".6" />
      <T x={234} y={797.5} s={4.2} w={12} f="#777">Search</T>
      <R x={274} y={793.5} w={7} h={5} f="#cb7a21" r={1.5} />
      <path d="M276 793.500v-1h3v1M274 796h7" stroke="#5a3515" strokeWidth=".6" fill="none" />
      <circle cx="292" cy="795.800" r="2.800" fill="#d95faa" />
      <path d="M289.500 796l2-3.500h3l-2 3.500z" fill="#2a8be0" />
      <path d="M290 798l1.500-2h3l-1.500 2.500z" fill="#eeb32d" />
      <R x={301} y={793} w={3} h={5} f="#222" />
      <R x={301} y={796} w={6} h={2.5} f="#333" />
      <circle cx="318" cy="796" r="2.500" fill="#7b8de0" />
      <path d="M317 795l2.300 1-2.300 1z" fill="#fff" />
      <R x={326} y={793} w={4} h={2} f="#d69a1c" r={0.5} />
      <R x={326} y={794} w={7} h={4.5} f="#f3be31" r={0.8} />
      <R x={339} y={794} w={6} h={5} f="#5461c6" r={1} />
      <circle cx="344.500" cy="793.500" r="1.800" fill="#cd2b2b" />
      <circle cx="354.500" cy="796" r="3.200" fill="#1593ce" />
      <circle cx="355.500" cy="795.500" r="1.5" fill="#78ddb4" />
      <R x={363} y={793} w={7} h={6} f="#15609b" r={1} />
      <circle cx="366.500" cy="796" r="1.5" fill="#bcd8ef" />
      <R x={377.5} y={792.5} w={5.5} h={6} f="#37a5e8" r={0.8} />
      <R x={376} y={794} w={4.5} h={4.5} f="#0d66b8" r={0.8} />
      <circle cx="391.500" cy="796" r="3.200" fill="#dba52a" />
      <path d="M388.500 795a3.200 3.200 0 0 1 6 0z" fill="#d64233" />
      <path d="M388.500 795a3.200 3.200 0 0 0 3 4.200v-3z" fill="#31a050" />
      <circle cx="391.500" cy="796" r="1.400" fill="#287be3" stroke="#fff" strokeWidth=".4" />
      <path d="M445 797l2-2 2 2M472 795q2-1.500 4 0m-3 1.500h2M479 795h3v2h-3zM484 794.500h5v3h-5z" fill="none" stroke="#333" strokeWidth=".7" />
      <R x={453} y={795} w={5} h={3} f="#1581d1" r={1.5} />
      <R x={464} y={793.5} w={2.5} h={4} f="#4986bd" r={1} />
      <T x={508} y={795} s={3.3} w={12} f="#333" end>1:05 PM</T>
      <T x={508} y={799.3} s={3.3} w={14} f="#333" end>4/1/2024</T>
      <circle cx="512.500" cy="796" r="1.5" fill="none" stroke="#555" strokeWidth=".6" />
    </g>
  );
}

function Preview() {
  return (
    <svg
      className="block h-[405px] w-[932px]"
      viewBox="73 396 932 405"
      fontFamily='"Liberation Sans", Arial, sans-serif'
      role="img"
    >
      <defs>
        <linearGradient id="blueBar">
          <stop offset="0" stopColor="#0ca5e2" />
          <stop offset=".3" stopColor="#0b9dd2" />
          <stop offset="1" stopColor="#0998cc" />
        </linearGradient>
        <linearGradient id="shade">
          <stop offset="0" stopColor="#555" stopOpacity=".2" />
          <stop offset=".4" stopColor="#222" />
          <stop offset=".9" stopColor="#333" />
          <stop offset="1" stopColor="#555" stopOpacity=".5" />
        </linearGradient>
      </defs>
      <WindowPamela />
      <WindowMartha />
      <WindowDashboard />
    </svg>
  );
}

function AlertDialog() {
  return (
    <div
      role="alertdialog"
      className="absolute top-[4px] left-[314px] flex h-[147px] w-[450px] flex-col rounded-[13px] border border-[#4a4f50] bg-[#181d1f] px-5 pt-[21px] pb-5 font-['Open_Sans',sans-serif] shadow-[0_2px_5px_rgba(0,0,0,0.45)]"
    >
      <h2 className="text-[15px] leading-5 font-semibold text-[#dfe3e4]">localhost:3000 says</h2>
      <p className="mt-3 text-[12.5px] leading-[18px] tracking-[-0.02px] text-[#dfe3e4]">Link copied to clipboard</p>
      <button className="mt-auto h-[38px] w-16 self-end rounded-[18px] bg-[#74d6e5] pt-px text-xs font-medium text-[#14373d]">
        OK
      </button>
    </div>
  );
}

export default function App() {
  return (
    <div className="relative h-[878px] overflow-hidden bg-white font-['Roboto',sans-serif] text-black">
      <div className="h-2 border-t border-b border-t-[#202023] border-b-[#555] bg-[#383838]" />
      <main className="mr-[13px] ml-[46px] h-[870px] rounded-lg pt-[26px] pl-[27px] shadow-[0_1px_4px_rgba(0,0,0,0.12)]">
        <h1 className="text-[26px] leading-[34px] font-semibold tracking-[0.2px] whitespace-nowrap">File Detail: ALTEABU</h1>
        <div className="mt-[19px] flex gap-[17px] text-[19px] font-medium tracking-[0.2px] text-white">
          <button className="h-[47px] w-[119px] rounded bg-[#ef4444] pt-px">Copy Link</button>
          <button className="h-[47px] w-[90px] rounded bg-[#3b82f6] pt-px">Delete</button>
        </div>
        <label className="mt-[18px] block text-[15px] leading-5 font-medium tracking-[0.15px] text-[#374151]">
          Share with:
        </label>
        <div className="mt-[6px] flex h-10 w-[932px] items-center justify-between rounded-md border border-[#d1d5db] pr-1 pl-[17px] text-[15px] tracking-[0.2px] shadow-xs">
          <span className="pt-[2px]">Select a user</span>
          <svg className="h-3 w-[11px]" viewBox="0 0 11 12" fill="none" stroke="#000" strokeWidth="2.2">
            <path d="M1.300 4l4.200 4 4.200-4" />
          </svg>
        </div>
        <button className="mt-[9px] block h-[47px] w-[84px] rounded bg-[#22c55e] pt-px text-[19px] font-medium tracking-[0.2px] text-white">
          Share
        </button>
        <button className="mt-[17px] block h-[47px] w-[121px] rounded bg-[#f97316] pt-px text-[19px] font-medium tracking-[0.25px] text-white">
          Download
        </button>
        <div className="flex text-[19px] leading-[29px] tracking-[0.15px]">
          <span className="w-[325.5px]">New Name:</span>
          <span>Rename</span>
        </div>
        <p className="text-[19px] leading-[29px] tracking-[0.15px]">Image</p>
        <Preview />
      </main>
      <AlertDialog />
    </div>
  );
}
